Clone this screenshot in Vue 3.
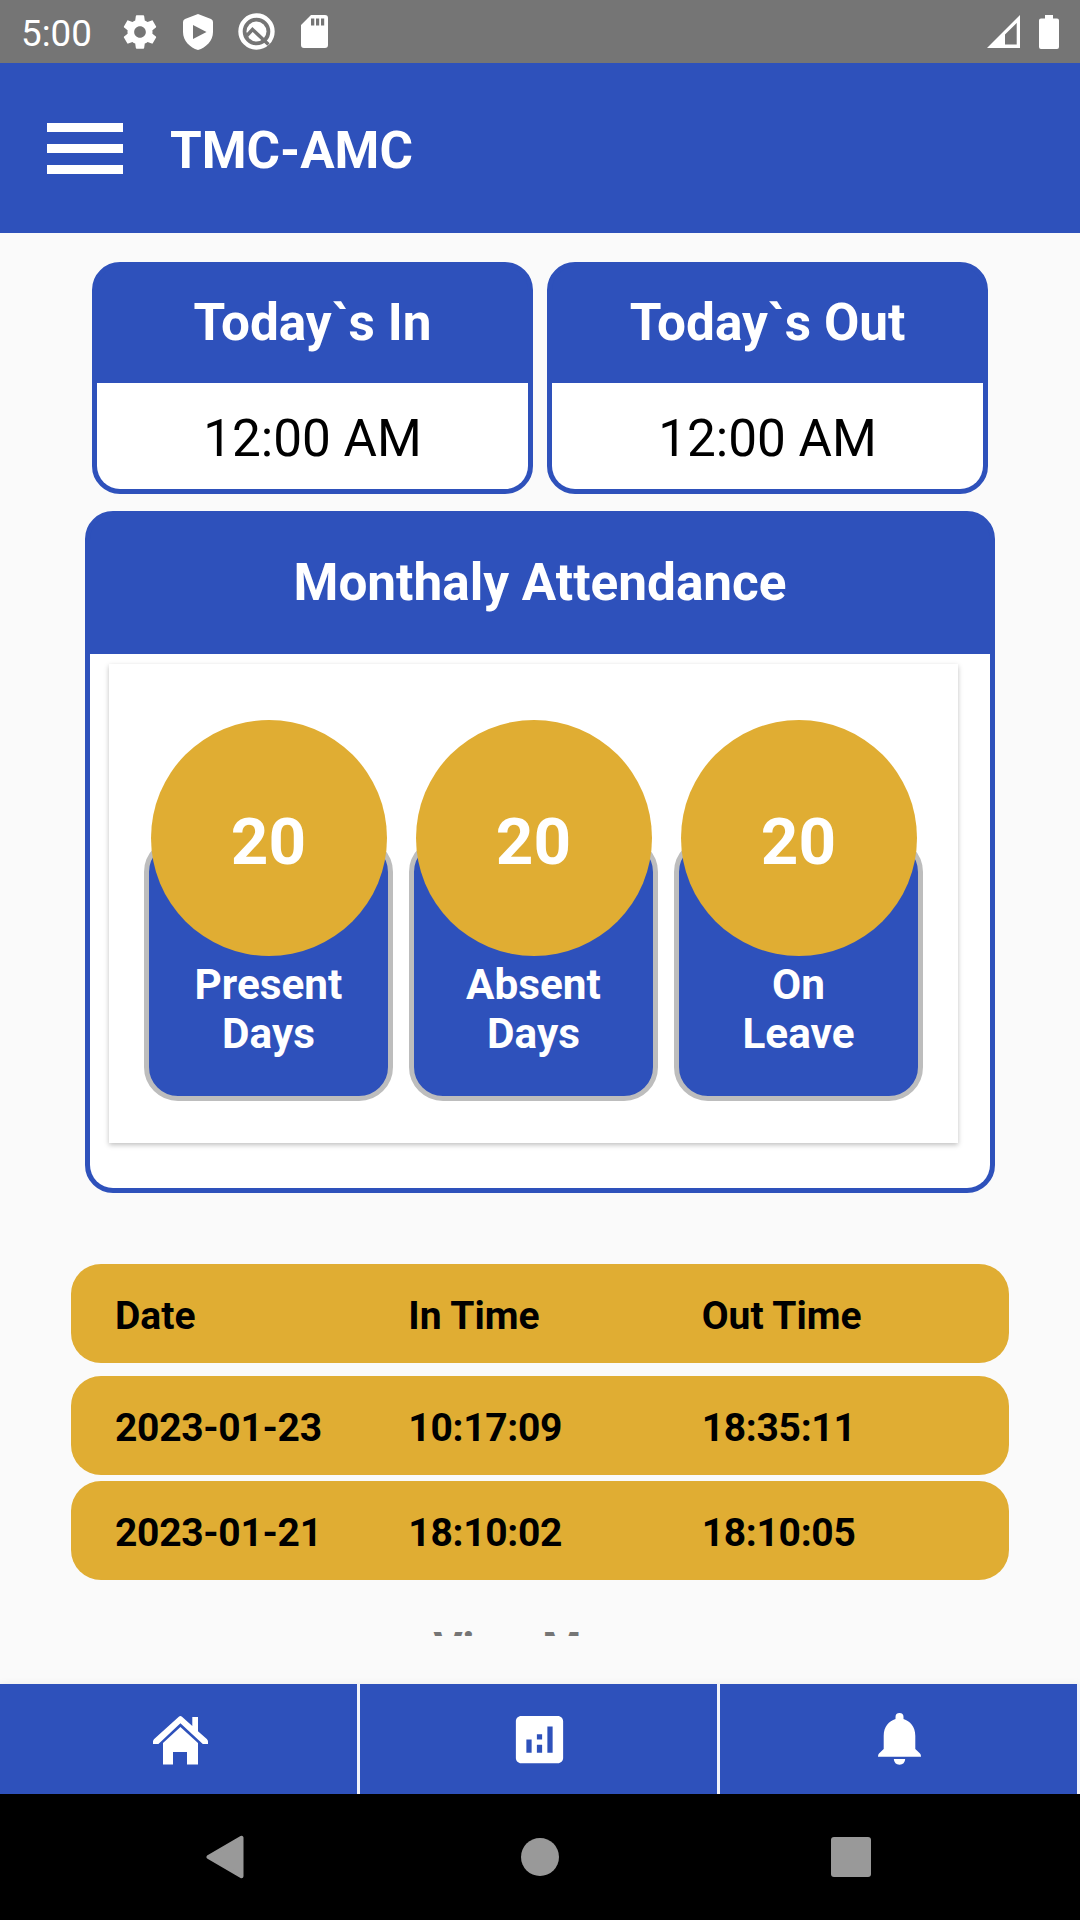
<script setup>
const today = [
  { title: 'Today`s In', time: '12:00 AM' },
  { title: 'Today`s Out', time: '12:00 AM' },
]

const stats = [
  { value: 20, lines: ['Present', 'Days'] },
  { value: 20, lines: ['Absent', 'Days'] },
  { value: 20, lines: ['On', 'Leave'] },
]

const rows = [
  { date: '2023-01-23', inTime: '10:17:09', outTime: '18:35:11' },
  { date: '2023-01-21', inTime: '18:10:02', outTime: '18:10:05' },
]
</script>

<template>
  <div class="screen">
    <header class="status">
      <span class="clock">5:00</span>
      <svg class="gear" width="40" height="40" viewBox="0 0 24 24">
        <path fill="#fff" d="M19.43 12.98c.04-.32.07-.64.07-.98s-.03-.66-.07-.98l2.11-1.65c.19-.15.24-.42.12-.64l-2-3.46c-.12-.22-.39-.3-.61-.22l-2.49 1c-.52-.4-1.08-.73-1.69-.98l-.38-2.65C14.46 2.18 14.25 2 14 2h-4c-.25 0-.46.18-.49.42l-.38 2.65c-.61.25-1.17.59-1.69.98l-2.49-1c-.23-.09-.49 0-.61.22l-2 3.46c-.13.22-.07.49.12.64l2.11 1.65c-.04.32-.07.65-.07.98s.03.66.07.98l-2.11 1.65c-.19.15-.24.42-.12.64l2 3.46c.12.22.39.3.61.22l2.49-1c.52.4 1.08.73 1.69.98l.38 2.65c.03.24.24.42.49.42h4c.25 0 .46-.18.49-.42l.38-2.65c.61-.25 1.17-.59 1.69-.98l2.49 1c.23.09.49 0 .61-.22l2-3.46c.12-.22.07-.49-.12-.64l-2.11-1.65zM12 15.5c-1.93 0-3.5-1.57-3.5-3.5s1.57-3.5 3.5-3.5 3.5 1.57 3.5 3.5-1.57 3.5-3.5 3.5z" />
      </svg>
      <svg class="shield" width="30" height="36" viewBox="0 0 30 36">
        <path fill="#fff" fill-rule="evenodd" d="M15 0 28 5Q30 6 30 8V18C30 27 23 33.500 15 36C7 33.500 0 27 0 18V8Q0 6 2 5ZM10 11V25L23.500 18Z" />
      </svg>
      <svg class="lens" width="37" height="37" viewBox="0 0 37 37" fill="none">
        <circle cx="18.500" cy="18.500" r="16" stroke="#fff" stroke-width="4.400" />
        <circle cx="18.500" cy="18.500" r="10" fill="#fff" />
        <path d="M9 22.500 14.500 16.500 30.500 31.500" stroke="#757575" stroke-width="3.400" />
      </svg>
      <svg class="sd" width="27" height="33" viewBox="0 0 27 33">
        <path fill="#fff" fill-rule="evenodd" d="M10 0H24Q27 0 27 3V30Q27 33 24 33H3Q0 33 0 30V10ZM10 3.500V10.500H13.300V3.500ZM15 3.500V10.500H18.200V3.500ZM20 3.500V10.500H23.200V3.500Z" />
      </svg>
      <svg class="signal" width="33" height="33" viewBox="0 0 33 33">
        <path fill="#fff" fill-rule="evenodd" d="M33 0V33H0ZM18 19.500V29.500H29.700V8Z" />
      </svg>
      <svg class="battery" width="20" height="34" viewBox="0 0 20 34">
        <path fill="#fff" d="M6 0H14V3.500H18Q20 3.500 20 5.500V32Q20 34 18 34H2Q0 34 0 32V5.500Q0 3.500 2 3.500H6Z" />
      </svg>
    </header>

    <div class="appbar">
      <div class="burger"><i></i><i></i><i></i></div>
      <h1>TMC-AMC</h1>
    </div>

    <main class="content">
      <section class="today">
        <article v-for="card in today" :key="card.title" class="box today-card">
          <h2>{{ card.title }}</h2>
          <p class="body">{{ card.time }}</p>
        </article>
      </section>

      <section class="box monthly">
        <h2>Monthaly Attendance</h2>
        <div class="body">
          <div class="panel">
            <div v-for="(s, i) in stats" :key="i" class="stat">
              <div class="circle">{{ s.value }}</div>
              <div class="tile">
                <span v-for="line in s.lines" :key="line">{{ line }}</span>
              </div>
            </div>
          </div>
        </div>
      </section>

      <section class="table">
        <div class="row head"><span>Date</span><span>In Time</span><span>Out Time</span></div>
        <div v-for="r in rows" :key="r.date" class="row record">
          <span>{{ r.date }}</span><span>{{ r.inTime }}</span><span>{{ r.outTime }}</span>
        </div>
      </section>

      <div class="more">View More</div>
    </main>

    <nav class="tabs">
      <div class="tab">
        <svg class="home" width="55" height="49" viewBox="0 0 55 49" fill="#fff">
          <path d="M25.800 .8Q27.400-.6 29 .8L39.300 10V1H45V15.300L53.800 23Q55 24 55 25.500V28H49.800L27.400 7.200 5.400 28H0V25.500Q0 24 1.200 23Z" />
          <path d="M27.400 11 45 27V48.500H34V36H20V48.500H10V27Z" />
        </svg>
      </div>
      <div class="tab">
        <svg class="chart" width="63" height="63" viewBox="0 0 24 24" fill="#fff">
          <path fill-rule="evenodd" d="M19 3H5c-1.100 0-2 .9-2 2v14c0 1.100.9 2 2 2h14c1.100 0 2-.9 2-2V5c0-1.100-.9-2-2-2zM9 17H7v-5h2v5zm4 0h-2v-3h2v3zm0-5h-2v-2h2v2zm4 5h-2V7h2v10z" />
        </svg>
      </div>
      <div class="tab">
        <svg class="bell" width="43" height="52" viewBox="0 0 43 52" fill="#fff">
          <path d="M17.500 6V4Q17.500 0 21.500 0T25.500 4V6C32 8 37.300 13.500 37.300 23V36L42 40.500Q43 41.500 43 43.700H0Q0 41.500 1 40.500L5.700 36V23C5.700 13.500 11 8 17.500 6Z" />
          <path d="M15.800 46H27.200Q26.800 51.700 21.500 51.700T15.800 46Z" />
        </svg>
      </div>
    </nav>

    <footer class="sysnav">
      <svg width="38" height="44" viewBox="0 0 38 44">
        <path fill="#999" stroke="#999" stroke-width="4" stroke-linejoin="round" d="M2.500 22 35.500 2.800V41.200Z" />
      </svg>
      <div class="sys-home"></div>
      <div class="sys-recent"></div>
    </footer>
  </div>
</template>

<style>
body {
  margin: 0;
  background: #fafafa;
}
</style>

<style scoped>
.screen {
  width: 1080px;
  height: 1920px;
  display: flex;
  flex-direction: column;
  overflow: hidden;
  background: #fafafa;
  color: #000;
  font-family: Roboto, "Liberation Sans", sans-serif;
}
h1, h2, p { margin: 0; }
svg { display: block; flex: none; }

.status {
  height: 63px;
  flex: none;
  box-sizing: border-box;
  padding: 0 21px 0 21px;
  display: flex;
  align-items: center;
  background: #757575;
}
.clock {
  width: 99px;
  padding-top: 4px;
  font-size: 36.750px;
  line-height: 44px;
  color: #fff;
}
.shield { margin-left: 23px; }
.lens { margin-left: 25px; }
.sd { margin-left: 26px; }
.signal { margin-left: auto; margin-right: 19px; }

.appbar {
  height: 170px;
  flex: none;
  display: flex;
  align-items: center;
  padding-left: 47px;
  background: #2e51bb;
}
.burger {
  width: 76px;
  height: 51px;
  display: flex;
  flex-direction: column;
  justify-content: space-between;
  margin-right: 47px;
}
.burger i { height: 9px; background: #fff; }
h1 {
  padding-top: 6px;
  font-size: 51.200px;
  line-height: 60px;
  font-weight: 700;
  color: #fff;
}

.content {
  height: 1403px;
  flex: none;
  overflow: hidden;
}
.today {
  display: flex;
  gap: 14px;
  margin: 29px 92px 0;
}
.box {
  box-sizing: border-box;
  border: 5px solid #2e51bb;
  border-radius: 28px;
  background: #2e51bb;
  text-align: center;
}
.box h2 {
  color: #fff;
  font-size: 51.300px;
  font-weight: 700;
}
.body {
  border-radius: 0 0 23px 23px;
  background: #fff;
}
.today-card { flex: 1; height: 232px; }
.today-card h2 { height: 116px; line-height: 112px; }
.today-card p { height: 106px; font-size: 51.300px; line-height: 112px; }

.monthly {
  width: 910px;
  height: 682px;
  margin: 17px auto 0;
}
.monthly h2 { height: 138px; line-height: 134px; }
.monthly .body {
  height: 534px;
  box-sizing: border-box;
  padding: 10px 0 0 19px;
}
.panel {
  width: 849px;
  height: 479px;
  box-sizing: border-box;
  padding: 56px 35px 0;
  display: flex;
  gap: 16px;
  box-shadow: 0 2px 5px rgba(0, 0, 0, .25);
}
.stat {
  width: 249px;
  display: flex;
  flex-direction: column;
  align-items: center;
}
.circle {
  width: 236px;
  height: 236px;
  margin-bottom: -118px;
  border-radius: 50%;
  background: #e0ad33;
  color: #fff;
  font-size: 65.600px;
  font-weight: 700;
  line-height: 243px;
  z-index: 1;
}
.tile {
  width: 249px;
  height: 263px;
  box-sizing: border-box;
  padding-top: 117px;
  border: 5px solid #bdbdbd;
  border-radius: 34px;
  background: #2e51bb;
  color: #fff;
  font-size: 42.300px;
  font-weight: 700;
  line-height: 49px;
  display: flex;
  flex-direction: column;
}

.table { margin: 71px 71px 0; }
.row {
  height: 99px;
  box-sizing: border-box;
  padding: 4px 14px 0 44px;
  margin-bottom: 6px;
  border-radius: 30px;
  background: #e0ad33;
  display: flex;
  align-items: center;
  font-size: 39px;
  font-weight: 700;
}
.row.head { margin-bottom: 13px; }
.row.record { letter-spacing: -.3px; }
.row span { flex: 1; }

.more {
  margin-top: 43px;
  text-align: center;
  font-size: 44.600px;
  line-height: 52px;
  font-weight: 700;
  color: #757575;
}

.tabs {
  height: 110px;
  flex: none;
  margin-top: 48px;
  display: flex;
  background: #2e51bb;
  box-shadow: 0 0 8px rgba(0, 0, 0, .06);
}
.tab {
  flex: 1;
  display: flex;
  align-items: center;
  justify-content: center;
  border-right: 3px solid #f1f3fa;
}
.home { margin: 2px 0 0 4px; }
.chart { margin-left: 2px; }
.bell { margin-left: 2px; }

.sysnav {
  height: 126px;
  flex: none;
  box-sizing: border-box;
  padding: 0 209px 0 206px;
  display: flex;
  align-items: center;
  justify-content: space-between;
  background: #000;
}
.sys-home {
  width: 38px;
  height: 38px;
  margin-left: 4px;
  border-radius: 50%;
  background: #999;
}
.sys-recent {
  width: 40px;
  height: 40px;
  border-radius: 3px;
  background: #999;
}
</style>
